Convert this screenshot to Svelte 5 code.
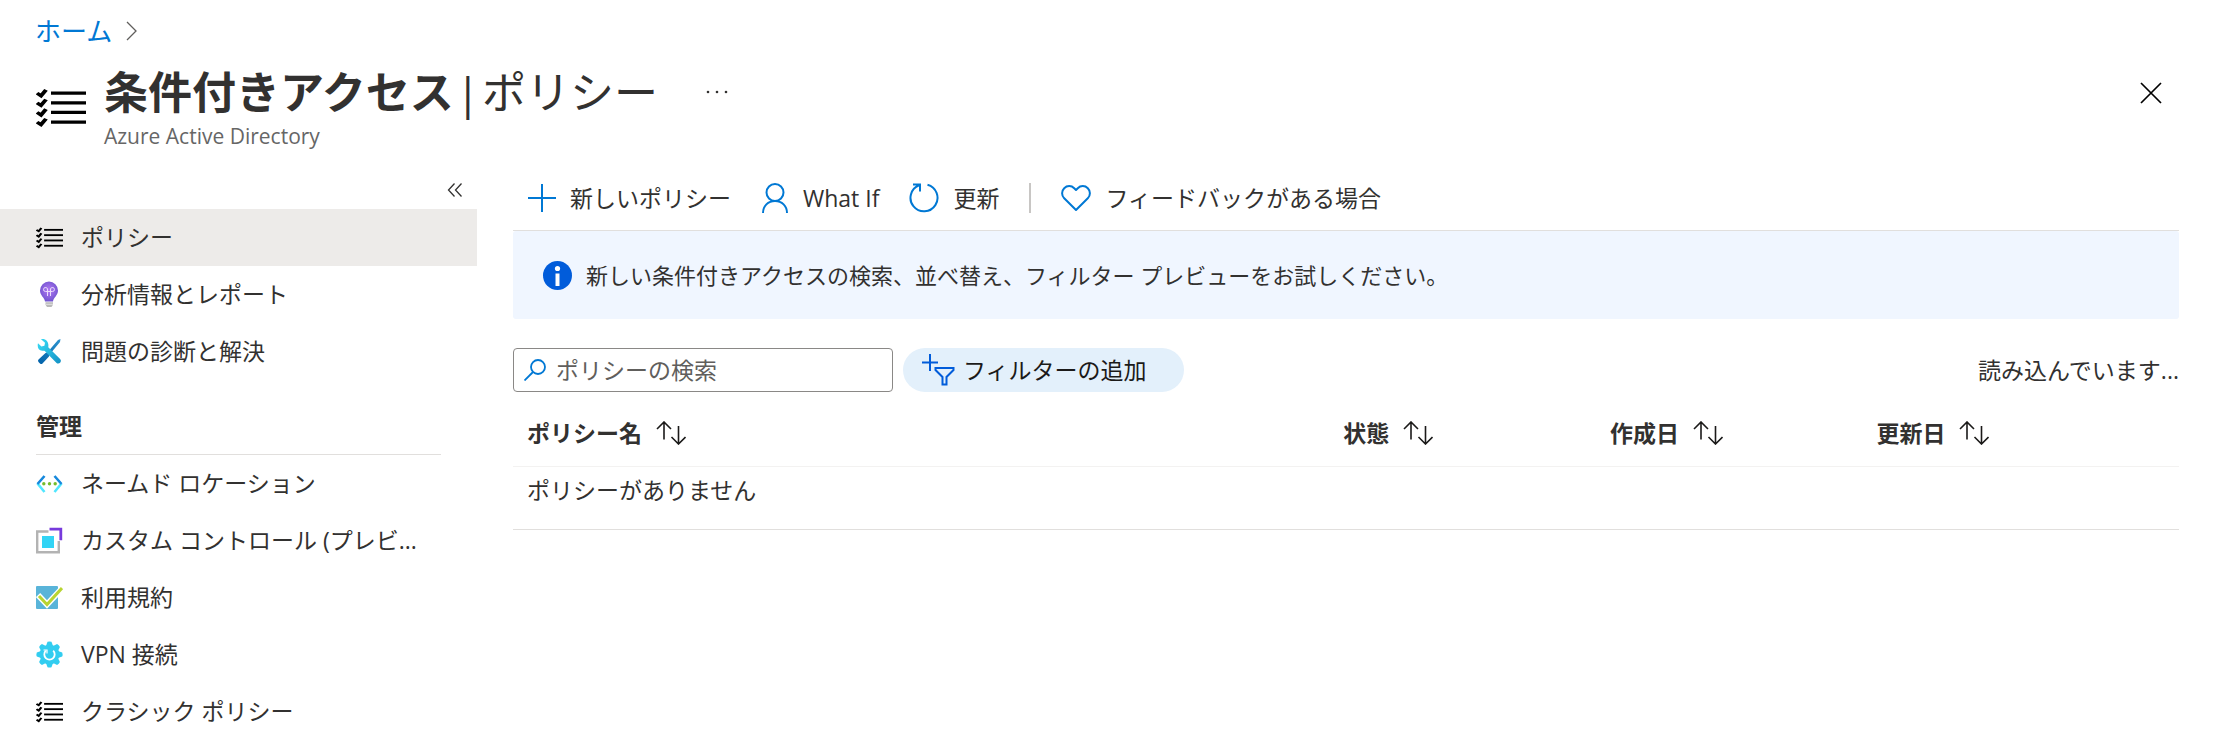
<script>
  const views = [
    { icon: 'list', label: 'ポリシー', active: true },
    { icon: 'bulb', label: '分析情報とレポート' },
    { icon: 'tools', label: '問題の診断と解決' }
  ];
  const manage = [
    { icon: 'location', label: 'ネームド ロケーション' },
    { icon: 'controls', label: 'カスタム コントロール (プレビ...' },
    { icon: 'terms', label: '利用規約' },
    { icon: 'gear', label: 'VPN 接続' },
    { icon: 'list', label: 'クラシック ポリシー' }
  ];
  const columns = ['ポリシー名', '状態', '作成日', '更新日'];
  const teeth = [0, 45, 90, 135, 180, 225, 270, 315];
  let query = $state('');
</script>

{#snippet checklist()}
  <g fill="none" stroke="#000">
    {#each [0, 1, 2, 3] as i}
      <path d="M15 {7 + i * 13}H50" stroke-width="4.500" />
      <path d="M1 {7 + i * 13}l4 3.500 5-8" stroke-width="4.200" />
    {/each}
  </g>
{/snippet}

{#snippet icon(name)}
  {#if name === 'list'}
    <svg class="nav-icon list" viewBox="0 0 50 54" preserveAspectRatio="none" aria-hidden="true">
      {@render checklist()}
    </svg>
  {:else if name === 'bulb'}
    <svg class="nav-icon" viewBox="0 0 27 27" aria-hidden="true">
      <defs>
        <radialGradient id="bulb" cx="0.5" cy="0.45" r="0.6">
          <stop offset="0" stop-color="#b57bf5" />
          <stop offset="1" stop-color="#6a50cc" />
        </radialGradient>
      </defs>
      <path d="M13 .5A9 9 0 0 0 4 9.500c0 5 4.500 7 5 11h8c.5-4 5-6 5-11A9 9 0 0 0 13 .5z" fill="url(#bulb)" />
      <path d="M11.500 15V9a2 2 0 1 0-2 1.500h7a2 2 0 1 0-2-1.500v6" fill="none" stroke="#eadcfb" stroke-width="1" />
      <path d="M9.500 21.200h7.500v2.500l-1.500 2.300h-4.500l-1.500-2.300z" fill="#b9b9b9" />
      <path d="M9.500 23.300h7.500" stroke="#e3e3e3" />
    </svg>
  {:else if name === 'tools'}
    <svg class="nav-icon" viewBox="0 0 27 27" aria-hidden="true">
      <defs>
        <linearGradient id="wrench" x1="0" y1="0" x2="1" y2="1">
          <stop offset="0" stop-color="#39def7" />
          <stop offset="1" stop-color="#1490c4" />
        </linearGradient>
        <linearGradient id="driver" x1="1" y1="0" x2="0" y2="1">
          <stop offset="0" stop-color="#2e94cf" />
          <stop offset="1" stop-color="#0060a8" />
        </linearGradient>
      </defs>
      <path d="M24.500 1l-2.500 1-10.500 12.300-2 .7-7 6.500a2 2 0 0 0 0 2.500l1.500 1.500a2 2 0 0 0 2.500 0l6.500-7 .6-2L24 4z" fill="url(#driver)" />
      <path d="M5 1.200l4 3.600-.6 2.900-3 .8L2 5.200c-1 3.500.4 7.300 4.300 7.600 1 .1 2-.1 2.500.3l11.500 11.600c2.500 2.500 6.300-1 3.800-3.800L12.500 9.600c-.4-.5-.1-1.300-.1-2.200C12.500 3 9 .2 5 1.200z" fill="url(#wrench)" />
    </svg>
  {:else if name === 'location'}
    <svg class="nav-icon" viewBox="0 0 27 27" fill="none" aria-hidden="true">
      <g stroke-width="2.600">
        <path d="M8.500 22L1.500 13.500M18.500 22l7-8.500" stroke="#50e6ff" />
        <path d="M8.500 6L1.500 14M18.500 6l7 8" stroke="#1688dc" />
      </g>
      <g fill="#76bc2d"><circle cx="7.800" cy="13.800" r="1.700" /><circle cx="13.500" cy="13.800" r="1.700" /><circle cx="19.200" cy="13.800" r="1.700" /></g>
    </svg>
  {:else if name === 'controls'}
    <svg class="nav-icon" viewBox="0 0 27 27" aria-hidden="true">
      <path d="M12.500 4.500H1.200v20.800h21.600V14" fill="none" stroke="#b3b3b3" stroke-width="2.400" />
      <path d="M13.500 2.200h11.300v11" fill="none" stroke="#773adc" stroke-width="2.800" />
      <rect x="6" y="9" width="12" height="12" fill="#32d4f5" />
    </svg>
  {:else if name === 'terms'}
    <svg class="nav-icon" viewBox="0 0 27 27" fill="none" aria-hidden="true">
      <rect x="0" y="2" width="22" height="23" rx="1" fill="#59b4d9" />
      <path d="M2 11l9 9.500L26.500 4" stroke="#fff" stroke-width="6" />
      <path d="M3 12l8 8.500L26 4" stroke="#b8d432" stroke-width="3" />
    </svg>
  {:else if name === 'gear'}
    <svg class="nav-icon" viewBox="0 0 27 27" aria-hidden="true">
      <g fill="#32cdf0">
        <circle cx="13.500" cy="13.500" r="9.800" />
        {#each teeth as angle}
          <path d="M10 5l1.500-4.200q2-.8 4 0L17 5z" transform="rotate({angle} 13.500 13.500)" />
        {/each}
      </g>
      <path d="M9.800 9.700a5.200 5.200 0 1 0 7.400 0" fill="none" stroke="#fff" stroke-width="1.800" />
      <path d="M7.500 9h3.500v3.500" fill="none" stroke="#fff" stroke-width="1.200" />
    </svg>
  {/if}
{/snippet}

{#snippet navList(items)}
  <ul>
    {#each items as item}
      <li>
        <a href="#top" class:active={item.active} aria-current={item.active ? 'page' : undefined}>
          {@render icon(item.icon)}
          <span>{item.label}</span>
        </a>
      </li>
    {/each}
  </ul>
{/snippet}

<div class="page" lang="ja">
  <nav class="breadcrumb" aria-label="階層">
    <a href="#top">ホーム</a>
    <svg width="12" height="20" viewBox="0 0 12 20" fill="none" stroke="#605e5c" stroke-width="1.300" aria-hidden="true"><path d="M1 1l9 9-9 9" /></svg>
  </nav>

  <header>
    <svg class="title-icon" viewBox="0 0 50 54" preserveAspectRatio="none" aria-hidden="true">{@render checklist()}</svg>
    <div class="heading">
      <div class="title-line">
        <h1><strong>条件付きアクセス</strong> <span>|</span> <span>ポリシー</span></h1>
        <button class="more" aria-label="その他"><svg width="22" height="4" viewBox="0 0 22 4" fill="#323130" aria-hidden="true"><circle cx="2" cy="2" r="1.300" /><circle cx="11" cy="2" r="1.300" /><circle cx="20" cy="2" r="1.300" /></svg></button>
      </div>
      <p>Azure Active Directory</p>
    </div>
    <button class="close" aria-label="閉じる"><svg width="22" height="22" viewBox="0 0 22 22" stroke="#000" stroke-width="1.700" aria-hidden="true"><path d="M1 1l20 20M21 1L1 21" /></svg></button>
  </header>

  <div class="body">
    <aside>
      <button class="collapse" aria-label="折りたたむ"><svg width="16" height="14" viewBox="0 0 16 14" fill="none" stroke="#323130" stroke-width="1.300" aria-hidden="true"><path d="M7.500.5L1.500 7l6 6.500M14.500.5L8.500 7l6 6.500" /></svg></button>
      {@render navList(views)}
      <h2>管理</h2>
      {@render navList(manage)}
    </aside>

    <main>
      <div class="toolbar">
        <button>
          <svg width="28" height="28" viewBox="0 0 28 28" stroke="#0078d4" stroke-width="2" aria-hidden="true"><path d="M14 0v28M0 14h28" /></svg>
          <span>新しいポリシー</span>
        </button>
        <button>
          <svg width="28" height="30" viewBox="0 0 28 30" fill="none" stroke="#0078d4" stroke-width="2" aria-hidden="true"><circle cx="14" cy="9.500" r="8.500" /><path d="M2 30c0-7 5-12 12-12s12 5 12 12" /></svg>
          <span>What If</span>
        </button>
        <button>
          <svg width="30" height="30" viewBox="0 0 30 30" fill="none" stroke="#0078d4" stroke-width="2" aria-hidden="true"><path d="M18.500 1.800a13.500 13.500 0 1 1-8.500.5M4 1.500h7v7" /></svg>
          <span>更新</span>
        </button>
        <i class="divider"></i>
        <button>
          <svg width="30" height="28" viewBox="0 0 30 28" fill="none" stroke="#0078d4" stroke-width="2" stroke-linejoin="round" aria-hidden="true"><path d="M15 26L3.200 14.200a7 7 0 0 1 0-10 7 7 0 0 1 10 0L15 6l1.800-1.800a7 7 0 0 1 10 0 7 7 0 0 1 0 10z" /></svg>
          <span>フィードバックがある場合</span>
        </button>
      </div>

      <div class="banner" role="status">
        <svg width="29" height="29" viewBox="0 0 29 29" aria-hidden="true"><circle cx="14.500" cy="14.500" r="14.500" fill="#015cda" /><circle cx="14.500" cy="7.500" r="2.600" fill="#fff" /><path d="M12.500 12.500h4V25h-4z" fill="#fff" /></svg>
        <span>新しい条件付きアクセスの検索、並べ替え、フィルター プレビューをお試しください。</span>
      </div>

      <div class="filters">
        <label class="search">
          <svg width="22" height="22" viewBox="0 0 22 22" fill="none" stroke="#0078d4" stroke-width="1.800" aria-hidden="true"><circle cx="14" cy="8" r="7" /><path d="M9 13l-8.500 8.500" /></svg>
          <input type="text" placeholder="ポリシーの検索" aria-label="ポリシーの検索" bind:value={query} />
        </label>
        <button class="pill">
          <svg width="33" height="32" viewBox="0 0 33 32" fill="none" stroke="#015cda" stroke-width="2" aria-hidden="true"><path d="M8 0v17M0 8.500h16" /><path d="M13.500 14h18v2l-7 7v7.500h-4V23l-7-7z" /></svg>
          <span>フィルターの追加</span>
        </button>
        <span class="loading">読み込んでいます...</span>
      </div>

      <table>
        <thead>
          <tr>
            {#each columns as column}
              <th scope="col">
                <button>{column}
                  <svg width="30" height="24" viewBox="0 0 30 24" fill="none" stroke="#1b1a19" stroke-width="1.600" aria-hidden="true"><path d="M8 18.500V1.500M1 8l7-7 7 7M22.500 5v17.500M15.500 16l7 7 7-7" /></svg>
                </button>
              </th>
            {/each}
          </tr>
        </thead>
        <tbody>
          <tr><td colspan="4">ポリシーがありません</td></tr>
        </tbody>
      </table>
    </main>
  </div>
</div>

<style>
  :global(body) { margin: 0; background: #fff; }
  .page {
    font: 400 23px/32px "Open Sans", "Noto Sans CJK JP", sans-serif;
    color: #323130;
    overflow: hidden;
  }
  button { font: inherit; color: inherit; background: none; border: 0; padding: 0; cursor: pointer; }
  a { text-decoration: none; color: inherit; }
  svg { flex: none; display: block; }
  ul { list-style: none; margin: 0; padding: 0; }

  .breadcrumb { display: flex; align-items: center; gap: 14px; padding: 14px 35px 0; height: 34px; }
  .breadcrumb a { color: #0078d4; font-size: 26px; }

  header { display: flex; align-items: flex-start; padding: 16px 76px 0 36px; height: 96px; }
  .title-icon { width: 50px; height: 40px; margin-top: 24px; }
  .heading { flex: 1; margin-left: 18px; }
  .title-line { display: flex; align-items: center; gap: 48px; height: 56px; }
  h1 { display: flex; gap: 2px; margin: 0; font-size: 44px; line-height: 56px; font-weight: 400; }
  h1 strong { font-weight: 700; }
  .heading p { margin: 0; font-size: 21px; color: #666; }
  .close { margin-top: 18px; }

  .body { display: flex; align-items: flex-start; }
  aside { width: 477px; flex: none; }
  .collapse { display: flex; justify-content: flex-end; align-items: center; width: 100%; height: 49px; padding: 10px 14px 0 0; box-sizing: border-box; }
  aside a { display: flex; align-items: center; gap: 18px; height: 57px; padding: 0 36px; }
  aside a.active { background: #edebe9; }
  aside a span { padding-bottom: 2px; white-space: nowrap; }
  .nav-icon { width: 27px; height: 27px; }
  .nav-icon.list { height: 22px; }
  h2 { margin: 30px 36px 0; padding-bottom: 12px; border-bottom: 1px solid #e1dfdd; font-size: 23px; line-height: 32px; font-weight: 700; }

  main { flex: 1; min-width: 0; padding: 6px 59px 0 36px; }
  .toolbar { display: flex; align-items: center; height: 64px; border-bottom: 1px solid #e1dfdd; padding: 0 15px; gap: 30px; }
  .toolbar button { display: flex; align-items: center; gap: 14px; }
  .divider { width: 2px; height: 30px; background: #c8c6c4; }

  .banner { display: flex; align-items: center; gap: 14px; min-height: 88px; padding: 0 30px; background: #f0f6ff; border-radius: 3px; font-size: 22px; }

  .filters { display: flex; align-items: center; margin-top: 29px; gap: 10px; }
  .search { display: flex; align-items: center; gap: 10px; width: 380px; height: 44px; box-sizing: border-box; padding: 0 10px; border: 1px solid #8a8886; border-radius: 4px; }
  .search input { flex: 1; min-width: 0; border: 0; outline: 0; padding: 0; background: none; font: inherit; color: inherit; }
  .search input::placeholder { color: #605e5c; opacity: 1; }
  .pill { display: flex; align-items: center; gap: 8px; height: 44px; padding: 0 37px 0 19px; border-radius: 22px; background: #e3f0fb; color: #1b1a19; }
  .loading { margin-left: auto; }

  table { width: 100%; margin-top: 10px; border-collapse: collapse; table-layout: fixed; text-align: left; }
  th { box-sizing: border-box; width: 16%; padding: 0 14px 2px; height: 64px; font-weight: 700; border-bottom: 1px solid #f3f2f1; }
  th:first-child { width: 49%; }
  th:last-child { width: 19%; }
  th button { display: flex; align-items: center; gap: 14px; }
  td { padding: 7px 14px 23px; border-bottom: 1px solid #e1dfdd; }
</style>
